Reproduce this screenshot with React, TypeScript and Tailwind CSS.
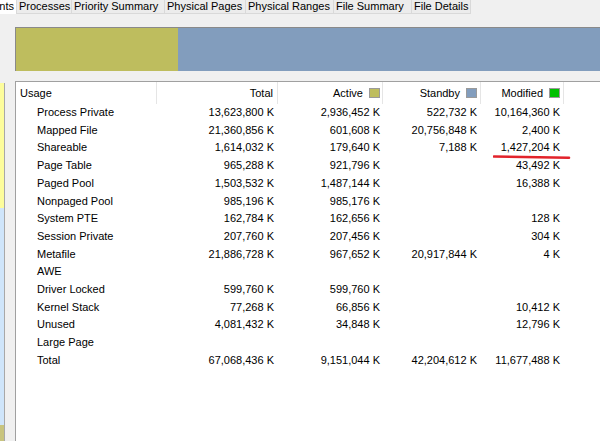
import React from "react";

const tabs = [
  { label: "Processes", w: "w-[55px]" },
  { label: "Priority Summary", w: "w-[93px]" },
  { label: "Physical Pages", w: "w-[81px]" },
  { label: "Physical Ranges", w: "w-[88px]" },
  { label: "File Summary", w: "w-[78px]" },
  { label: "File Details", w: "w-[59px]" },
];

type Row = { name: string; total: string; active: string; standby: string; modified: string };

const rows: Row[] = [
  { name: "Process Private", total: "13,623,800 K", active: "2,936,452 K", standby: "522,732 K", modified: "10,164,360 K" },
  { name: "Mapped File", total: "21,360,856 K", active: "601,608 K", standby: "20,756,848 K", modified: "2,400 K" },
  { name: "Shareable", total: "1,614,032 K", active: "179,640 K", standby: "7,188 K", modified: "1,427,204 K" },
  { name: "Page Table", total: "965,288 K", active: "921,796 K", standby: "", modified: "43,492 K" },
  { name: "Paged Pool", total: "1,503,532 K", active: "1,487,144 K", standby: "", modified: "16,388 K" },
  { name: "Nonpaged Pool", total: "985,196 K", active: "985,176 K", standby: "", modified: "" },
  { name: "System PTE", total: "162,784 K", active: "162,656 K", standby: "", modified: "128 K" },
  { name: "Session Private", total: "207,760 K", active: "207,456 K", standby: "", modified: "304 K" },
  { name: "Metafile", total: "21,886,728 K", active: "967,652 K", standby: "20,917,844 K", modified: "4 K" },
  { name: "AWE", total: "", active: "", standby: "", modified: "" },
  { name: "Driver Locked", total: "599,760 K", active: "599,760 K", standby: "", modified: "" },
  { name: "Kernel Stack", total: "77,268 K", active: "66,856 K", standby: "", modified: "10,412 K" },
  { name: "Unused", total: "4,081,432 K", active: "34,848 K", standby: "", modified: "12,796 K" },
  { name: "Large Page", total: "", active: "", standby: "", modified: "" },
  { name: "Total", total: "67,068,436 K", active: "9,151,044 K", standby: "42,204,612 K", modified: "11,677,488 K" },
];

const cols = "grid grid-cols-[141px_121px_105px_98px_83px_1fr]";

function HeaderCell({ label, swatch, pr }: { label: string; swatch?: string; pr: string }) {
  return (
    <div className={`flex justify-end items-start pt-[5px] border-r border-[#e5e5e5] ${pr}`}>
      <span>{label}</span>
      {swatch && <span className={`ml-[6px] mt-[1px] w-[11px] h-[10px] border border-[#9a9a9a] ${swatch}`} />}
    </div>
  );
}

export default function App() {
  return (
    <div
      className="relative w-[600px] h-[441px] overflow-hidden bg-[#f0f0f0] text-[11px] text-black"
      style={{ fontFamily: '"Liberation Sans", Arial, sans-serif' }}
    >
      {/* tab strip */}
      <div className="flex h-[14px] leading-[12px] whitespace-nowrap">
        <div className="w-[17px] bg-white overflow-hidden flex justify-end pr-[2px] border-r border-[#d9d9d9]">
          <span>Use Counts</span>
        </div>
        {tabs.map((t) => (
          <div key={t.label} className={`${t.w} shrink-0 pl-[2px] border-r border-b border-[#d9d9d9] bg-[#ececec]`}>
            {t.label}
          </div>
        ))}
      </div>

      <div className="flex">
        {/* left strip */}
        <div className="w-[15px] shrink-0 flex flex-col">
          <div className="h-[69px]" />
          <div className="w-[5px] border-r border-[#a8a8a8] flex flex-col">
            <div className="h-[125px] bg-[#fdfd9c]" />
            <div className="h-[217px] bg-[#cfe5fa]" />
            <div className="h-[20px] bg-[#c8c47e]" />
          </div>
        </div>

        <div className="flex-1 flex flex-col">
          {/* usage bar */}
          <div className="mt-[13px] h-[44px] flex border-t border-l border-[#8a8a8a]">
            <div className="w-[162px] bg-[#bebd5e]" />
            <div className="flex-1 bg-[#829dbd]" />
          </div>

          {/* list */}
          <div className="relative mt-[10px] h-[400px] bg-white border-t border-l border-[#a0a0a0]">
            <div className={`${cols} h-[22px] leading-[12px]`}>
              <div className="pl-[4px] pt-[5px] border-r border-[#e5e5e5]">Usage</div>
              <HeaderCell label="Total" pr="pr-[4px]" />
              <HeaderCell label="Active" swatch="bg-[#bebd5e]" pr="pr-[2px]" />
              <HeaderCell label="Standby" swatch="bg-[#829dbd]" pr="pr-[3px]" />
              <HeaderCell label="Modified" swatch="bg-[#00c000]" pr="pr-[3px]" />
              <div />
            </div>
            {rows.map((r) => (
              <div key={r.name} className={`${cols} h-[17.71px] leading-[17.71px] whitespace-nowrap`}>
                <div className="pl-[21px]">{r.name}</div>
                <div className="text-right pr-[4px]">{r.total}</div>
                <div className="text-right pr-[3px]">{r.active}</div>
                <div className="text-right pr-[4px]">{r.standby}</div>
                <div className="text-right pr-[4px]">{r.modified}</div>
                <div />
              </div>
            ))}

            {/* red underline annotation */}
            <svg className="absolute left-[477px] top-[72px]" width="78" height="6" viewBox="0 0 78 6">
              <path d="M1 2.5 Q 38 3.2 76 3.8" stroke="#e2232b" strokeWidth="2.6" fill="none" strokeLinecap="round" />
            </svg>
          </div>
        </div>
      </div>
    </div>
  );
}
